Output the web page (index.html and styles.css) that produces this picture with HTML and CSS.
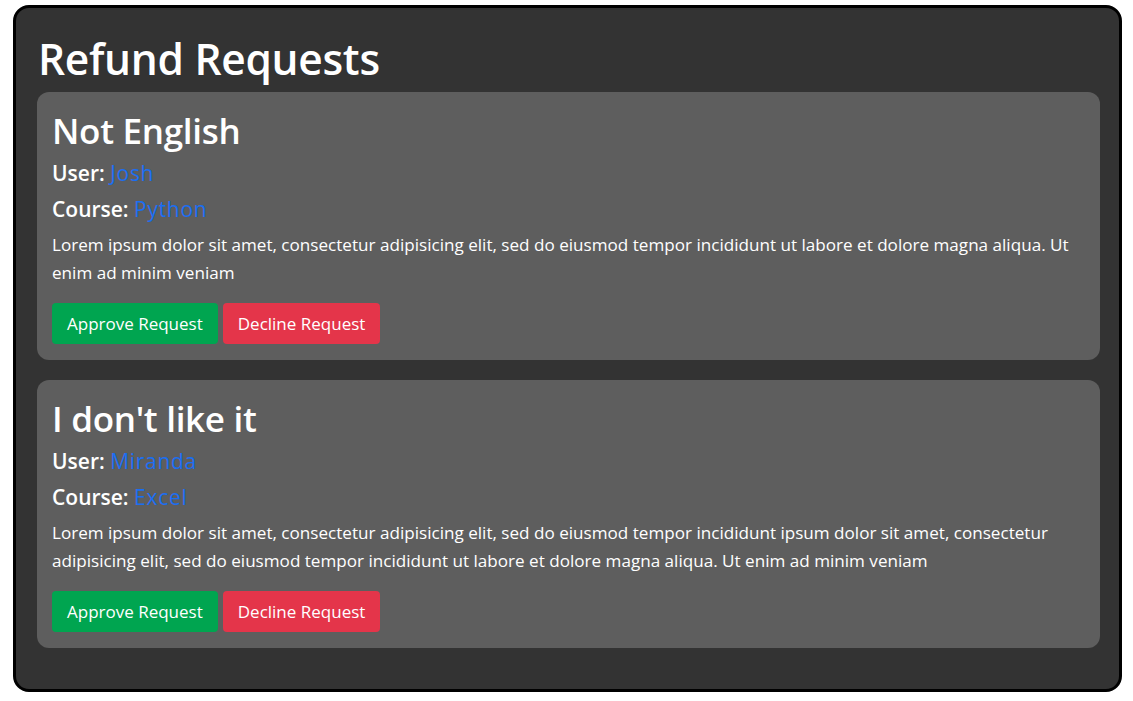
FILE: index.html
```html
<!DOCTYPE html>
<html>
<head>
<meta charset="utf-8">
<link rel="stylesheet" href="styles.css">
</head>
<body>
<div class="panel">
  <h1 class="page-title">Refund Requests</h1>
  <div class="list">
    <div class="card">
      <h2 class="card-title">Not English</h2>
      <div class="meta"><strong>User:</strong> <a class="link" href="#">Josh</a></div>
      <div class="meta"><strong>Course:</strong> <a class="link" href="#">Python</a></div>
      <p class="desc">Lorem ipsum dolor sit amet, consectetur adipisicing elit, sed do eiusmod tempor incididunt ut labore et dolore magna aliqua. Ut enim ad minim veniam</p>
      <div class="actions">
        <button class="btn btn-approve">Approve Request</button>
        <button class="btn btn-decline">Decline Request</button>
      </div>
    </div>
    <div class="card">
      <h2 class="card-title">I don't like it</h2>
      <div class="meta"><strong>User:</strong> <a class="link" href="#">Miranda</a></div>
      <div class="meta"><strong>Course:</strong> <a class="link" href="#">Excel</a></div>
      <p class="desc">Lorem ipsum dolor sit amet, consectetur adipisicing elit, sed do eiusmod tempor incididunt ipsum dolor sit amet, consectetur adipisicing elit, sed do eiusmod tempor incididunt ut labore et dolore magna aliqua. Ut enim ad minim veniam</p>
      <div class="actions">
        <button class="btn btn-approve">Approve Request</button>
        <button class="btn btn-decline">Decline Request</button>
      </div>
    </div>
  </div>
</div>
</body>
</html>
```
FILE: styles.css
```css
* { box-sizing: border-box; }
html, body { margin: 0; padding: 0; background: #ffffff; }
body {
  font-family: "Open Sans", "Noto Sans", sans-serif;
  color: #ffffff;
  padding: 5px 11px 10px 13px;
}
.panel {
  background: #333333;
  border: 3px solid #000000;
  border-radius: 16px;
  padding: 22px 19px 40px 21px;
  height: 687px;
}
.page-title {
  margin: -4px 0 0 1px;
  font-size: 42.5px;
  font-weight: 600;
  line-height: 66px;
  letter-spacing: -0.3px;
}
.list {
  display: flex;
  flex-direction: column;
  gap: 20px;
}
.card {
  background: #5e5e5e;
  border-radius: 12px;
  padding: 15px 15px 16px 15px;
  height: 268px;
}
.card-title {
  margin: 0;
  font-size: 35px;
  font-weight: 600;
  line-height: 48px;
  letter-spacing: -0.3px;
}
.meta {
  font-size: 21px;
  line-height: 36px;
  font-weight: 400;
}
.meta strong { font-weight: 600; }
.link { color: #1b6ef3; text-decoration: none; letter-spacing: 0.7px; }
.desc {
  margin: 4px 0 16px 0;
  font-size: 17.1px;
  line-height: 28px;
}
.actions { display: flex; gap: 5px; }
.btn {
  font-family: inherit;
  font-size: 17px;
  line-height: 27px;
  padding: 7px 15px;
  border: 0;
  border-radius: 4px;
  color: #ffffff;
}
.btn-approve { background: #00a550; }
.btn-decline { background: #e4354a; }
```
